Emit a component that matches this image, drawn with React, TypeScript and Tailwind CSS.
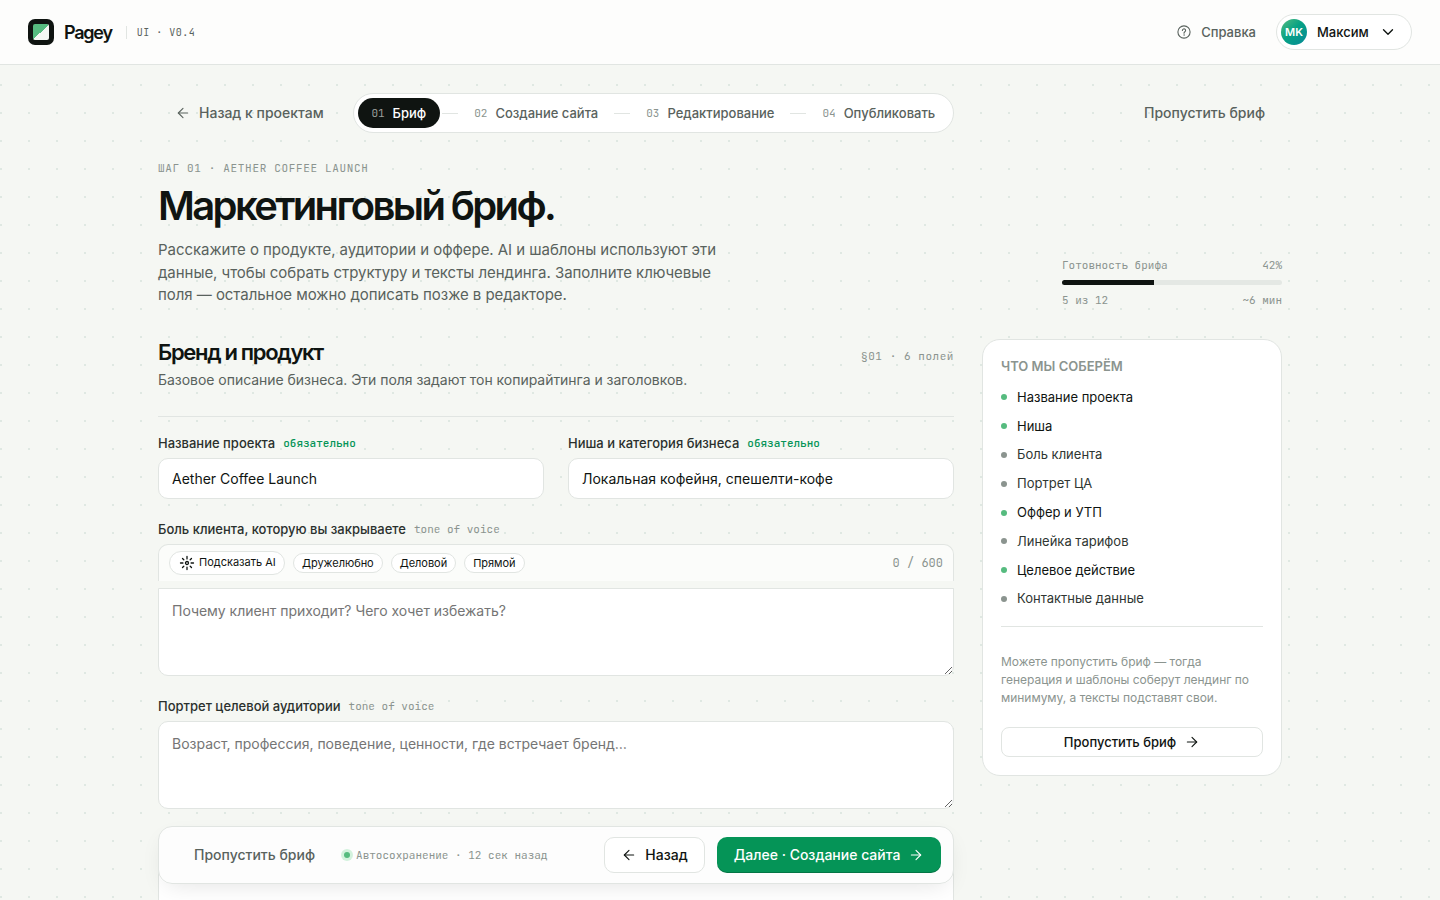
import type { ReactNode } from 'react';
import { ArrowLeft, ArrowRight, ChevronDown } from 'lucide-react';

const mono = "font-['JetBrains_Mono','Liberation_Mono',monospace]";

const steps = [
  { n: '01', label: 'Бриф', active: true },
  { n: '02', label: 'Создание сайта' },
  { n: '03', label: 'Редактирование' },
  { n: '04', label: 'Опубликовать' },
];

const checklist = [
  { label: 'Название проекта', done: true },
  { label: 'Ниша', done: true },
  { label: 'Боль клиента', done: false },
  { label: 'Портрет ЦА', done: false },
  { label: 'Оффер и УТП', done: true },
  { label: 'Линейка тарифов', done: false },
  { label: 'Целевое действие', done: true },
  { label: 'Контактные данные', done: false },
];

function Label({ children, hint, required }: { children: ReactNode; hint: string; required?: boolean }) {
  return (
    <div className="flex h-5 items-center gap-2 text-[13px] font-medium text-[#2a302d]">
      <span className="pt-0.5">{children}</span>
      <span className={`${mono} text-[11px] ${required ? 'font-medium text-[#059457]' : 'font-normal text-[#8b948f]'}`}>
        {hint}
      </span>
    </div>
  );
}

function HelpIcon() {
  return (
    <svg width="14" height="14" viewBox="0 0 14 14" fill="none" stroke="currentColor" strokeWidth="1.1" strokeLinecap="round">
      <circle cx="7" cy="7" r="6.1" />
      <path d="M5.4 5.5a1.6 1.6 0 1 1 2.5 1.3c-.6.4-.9.7-.9 1.4" />
      <circle cx="7" cy="10" r=".35" fill="currentColor" strokeWidth=".5" />
    </svg>
  );
}

function SparkIcon() {
  return (
    <svg width="16" height="16" viewBox="0 0 16 16" fill="none" stroke="currentColor" strokeWidth="1.3" strokeLinecap="round">
      <circle cx="8" cy="8" r="1.5" />
      <path d="M8 1.5v2.4M8 12.1v2.4M1.5 8h2.4M12.1 8h2.4M3.5 3.5l1.3 1.3M11.2 11.2l1.3 1.3M12.5 3.5l-1.3 1.3M4.8 11.2l-1.3 1.3" />
    </svg>
  );
}

function Header() {
  return (
    <header className="flex h-[65px] items-center justify-between border-b border-[#e1e5e2] bg-[#fdfdfc] px-7">
      <div className="flex items-center">
        <div className="flex size-[26px] items-center justify-center rounded-[7px] bg-[#0f1411]">
          <div className="size-4 rounded-[2px] bg-[linear-gradient(135deg,#56bb7f_50%,#f5f7f3_50%)]" />
        </div>
        <span className="ml-2.5 text-[18px] font-semibold tracking-[-0.068em] text-[#0f1411]">Pagey</span>
        <span className={`${mono} ml-3.5 border-l border-[#e1e5e2] pl-2.5 text-[10px] leading-[13px] tracking-[0.05em] text-[#59625d]`}>UI · V0.4</span>
      </div>
      <div className="flex items-center gap-5">
        <div className="flex items-center gap-2 text-[13px] font-medium text-[#59625d]">
          <HelpIcon />
          <span className="ml-0.5 pt-0.5">Справка</span>
        </div>
        <div className="flex h-9 w-[136px] items-center rounded-full border border-[#e1e5e2] bg-white pl-1 text-[13px] font-medium text-[#0f1411]">
          <div className="flex size-[26px] items-center justify-center rounded-full bg-[linear-gradient(135deg,#56bb7f,#07a284_45%,#078a98)] text-[11px] font-semibold text-white">
            MK
          </div>
          <span className="ml-2.5 pt-0.5">Максим</span>
          <ChevronDown size={18} strokeWidth={1.8} className="ml-2.5" />
        </div>
      </div>
    </header>
  );
}

function Stepper() {
  return (
    <nav className="flex h-10 w-[601px] items-center rounded-full border border-[#e1e5e2] bg-white px-1 text-[13px] font-medium whitespace-nowrap text-[#59625d]">
      {steps.map((s, i) => (
        <div key={s.n} className="flex shrink-0 items-center">
          {i > 0 && <span className="mx-0.5 h-px w-4 bg-[#e1e5e2]" />}
          <span className={`flex h-[30px] items-center gap-2 rounded-full pr-3.5 ${s.active ? 'bg-[#0f1411] pl-[13.4px] text-white' : 'pl-3.5'}`}>
            <span className={`${mono} text-[11px] font-normal ${s.active ? 'text-[#9a9f9c]' : 'text-[#8b948f]'}`}>{s.n}</span>
            <span className="pt-0.5">{s.label}</span>
          </span>
        </div>
      ))}
    </nav>
  );
}

function Sidebar() {
  return (
    <aside className="h-[437px] w-[300px] rounded-[18px] border border-[#e1e5e2] bg-white px-[18px] pt-4">
      <h3 className="text-[13px] leading-5 font-semibold text-[#8b948f]">ЧТО МЫ СОБЕРЁМ</h3>
      <ul className="mt-[7.1px] flex flex-col">
        {checklist.map((c) => (
          <li key={c.label} className={`flex h-[28.8px] items-center gap-2.5 text-[13px] ${c.done ? 'text-[#0f1411]' : 'text-[#2f3632]'}`}>
            <span className={`size-1.5 rounded-full ${c.done ? 'bg-[#56bb7f]' : 'bg-[#8b948f]'}`} />
            {c.label}
          </li>
        ))}
      </ul>
      <div className="mt-[12.9px] border-t border-[#e1e5e2] pt-[26px]">
        <p className="text-[12px] leading-[18px] tracking-[-0.002em] text-[#8b948f]">
          Можете пропустить бриф — тогда генерация и шаблоны соберут лендинг по минимуму, а тексты подставят свои.
        </p>
      </div>
      <button className="mt-5 flex h-[30px] w-full items-center justify-center gap-2 rounded-[8px] border border-[#e1e5e2] text-[13px] font-medium text-[#0f1411]">
        Пропустить бриф <ArrowRight size={16} strokeWidth={1.65} />
      </button>
    </aside>
  );
}

function Chip({ children }: { children: ReactNode }) {
  return <span className="flex h-5 items-center rounded-full border border-[#e1e5e2] bg-white px-2 text-[11px] tracking-[-0.003em] text-[#0f1411]">{children}</span>;
}

function Form() {
  return (
    <section className="w-[796px]">
      <div className="flex h-[78px] justify-between border-b border-[#e1e5e2]">
        <div>
          <h2 className="-mt-px text-[22px] leading-7 font-semibold tracking-[-0.06em] text-[#0f1411]">Бренд и продукт</h2>
          <p className="mt-1 text-[14px] leading-5 tracking-[-0.0025em] text-[#59625d]">Базовое описание бизнеса. Эти поля задают тон копирайтинга и заголовков.</p>
        </div>
        <span className={`${mono} mt-[9px] text-[11px] leading-4 tracking-[0.05em] text-[#8b948f]`}>§01 · 6 полей</span>
      </div>
      <div className="mt-4 grid grid-cols-2 gap-6">
        <div>
          <Label hint="обязательно" required>Название проекта</Label>
          <input className="mt-[5px] h-[41px] w-full rounded-[10px] border border-[#e1e5e2] bg-white px-[13px] text-[14px] text-[#0f1411]" defaultValue="Aether Coffee Launch" />
        </div>
        <div>
          <Label hint="обязательно" required>Ниша и категория бизнеса</Label>
          <input className="mt-[5px] h-[41px] w-full rounded-[10px] border border-[#e1e5e2] bg-white px-[13px] text-[14px] text-[#0f1411]" defaultValue="Локальная кофейня, спешелти-кофе" />
        </div>
      </div>
      <div className="mt-5">
        <Label hint="tone of voice">Боль клиента, которую вы закрываете</Label>
        <div className="mt-[5px] flex h-[37px] items-center gap-2 rounded-t-[10px] border border-b-0 border-[#e1e5e2] bg-[#fbfcfa] px-2.5">
          <span className="flex h-6 w-[116px] items-center gap-1 rounded-full border border-[#e1e5e2] bg-white pl-[9px] text-[11px] whitespace-nowrap text-[#0f1411]">
            <SparkIcon /><span className="pb-0.5">Подсказать AI</span>
          </span>
          <Chip>Дружелюбно</Chip>
          <Chip>Деловой</Chip>
          <Chip>Прямой</Chip>
          <span className={`${mono} ml-auto text-[12px] text-[#8b948f]`}>0 / 600</span>
        </div>
        <textarea className="mt-[7px] block h-[88px] w-full resize-y rounded-b-[10px] border border-[#e1e5e2] bg-white px-[13px] pt-[11px] text-[14px] leading-[21px] tracking-[-0.002em] placeholder:text-[#757575]" placeholder="Почему клиент приходит? Чего хочет избежать?" />
      </div>
      <div className="mt-5">
        <Label hint="tone of voice">Портрет целевой аудитории</Label>
        <textarea className="mt-[5px] block h-[88px] w-full resize-y rounded-[10px] border border-[#e1e5e2] bg-white px-[13px] pt-[11px] text-[14px] leading-[21px] tracking-[-0.001em] placeholder:text-[#757575]" placeholder="Возраст, профессия, поведение, ценности, где встречает бренд…" />
      </div>
      <div className="mt-5 h-[90px] rounded-t-[14px] border border-b-0 border-[#e1e5e2] bg-white" />
    </section>
  );
}

function ActionBar() {
  return (
    <div className="absolute top-[826px] left-[158px] flex h-[58px] w-[796px] items-center rounded-[14px] border border-[#e1e5e2] bg-[#fdfdfd]/95 pr-3 pl-[35px] shadow-[0_8px_24px_-8px_rgba(15,20,17,0.12)]">
      <span className="pb-0.5 text-[14px] font-medium text-[#59625d]">Пропустить бриф</span>
      <span className="ml-[29px] size-1.5 rounded-full bg-[#56bb7f] shadow-[0_0_0_3px_#d3f2dd]" />
      <span className={`${mono} ml-1.5 text-[11px] text-[#8b948f]`}>Автосохранение · 12 сек назад</span>
      <button className="ml-auto flex h-9 w-[101px] items-center justify-center gap-2 rounded-[10px] border border-[#e1e5e2] bg-white text-[14px] font-medium text-[#0f1411]">
        <ArrowLeft size={16} strokeWidth={1.65} />
        <span className="pb-0.5">Назад</span>
      </button>
      <button className="ml-3 flex h-9 w-[224px] items-center justify-center gap-2 rounded-[10px] bg-[#059457] text-[14px] font-medium text-white shadow-[inset_0_-1px_0_rgba(0,0,0,0.2)]">
        <span className="pb-0.5">Далее · Создание сайта</span>
        <ArrowRight size={16} strokeWidth={1.65} />
      </button>
    </div>
  );
}

export default function App() {
  return (
    <div className="relative h-[900px] overflow-hidden bg-[#f5f7f3] bg-[radial-gradient(circle_at_1px_1px,#dfe8e2_1px,transparent_0)] bg-[size:28px_28px] font-['Inter','Liberation_Sans',sans-serif] antialiased">
      <Header />
      <main className="mx-auto w-[1124px] pt-7">
        <div className="flex h-10 items-center">
          <div className="flex w-[195px] items-center gap-2 pl-[17px] text-[14px] font-medium text-[#59625d]">
            <ArrowLeft size={16} strokeWidth={1.65} />
            <span className="pb-0.5">Назад к проектам</span>
          </div>
          <Stepper />
          <span className="ml-auto pr-[17px] pb-0.5 text-[14px] font-medium text-[#59625d]">Пропустить бриф</span>
        </div>
        <div className="mt-[27px] flex h-[146px] justify-between">
          <div>
            <div className={`${mono} text-[11px] leading-4 tracking-[0.06em] text-[#8b948f]`}>ШАГ 01 · AETHER COFFEE LAUNCH</div>
            <h1 className="mt-1.5 text-[40px] leading-[48px] font-semibold tracking-[-0.066em] text-[#0f1411]">Маркетинговый бриф.</h1>
            <p className="mt-[9px] w-[580px] text-[15px] leading-[22.5px] tracking-[-0.003em] text-[#59625d]">
              Расскажите о продукте, аудитории и оффере. AI и шаблоны используют эти данные, чтобы собрать структуру и тексты лендинга. Заполните ключевые поля — остальное можно дописать позже в редакторе.
            </p>
          </div>
          <div className={`${mono} mt-[97px] w-[220px] text-[11px] leading-4 text-[#8b948f]`}>
            <div className="flex justify-between"><span>Готовность брифа</span><span>42%</span></div>
            <div className="mt-[7px] h-[5px] overflow-hidden rounded-full bg-[#e4e8e4]">
              <div className="h-full w-[42%] bg-[#0f1411]" />
            </div>
            <div className="mt-[7px] flex justify-between"><span>5 из 12</span><span>~6 мин</span></div>
          </div>
        </div>
        <div className="mt-[33px] flex items-start justify-between">
          <Form />
          <Sidebar />
        </div>
      </main>
      <ActionBar />
    </div>
  );
}
